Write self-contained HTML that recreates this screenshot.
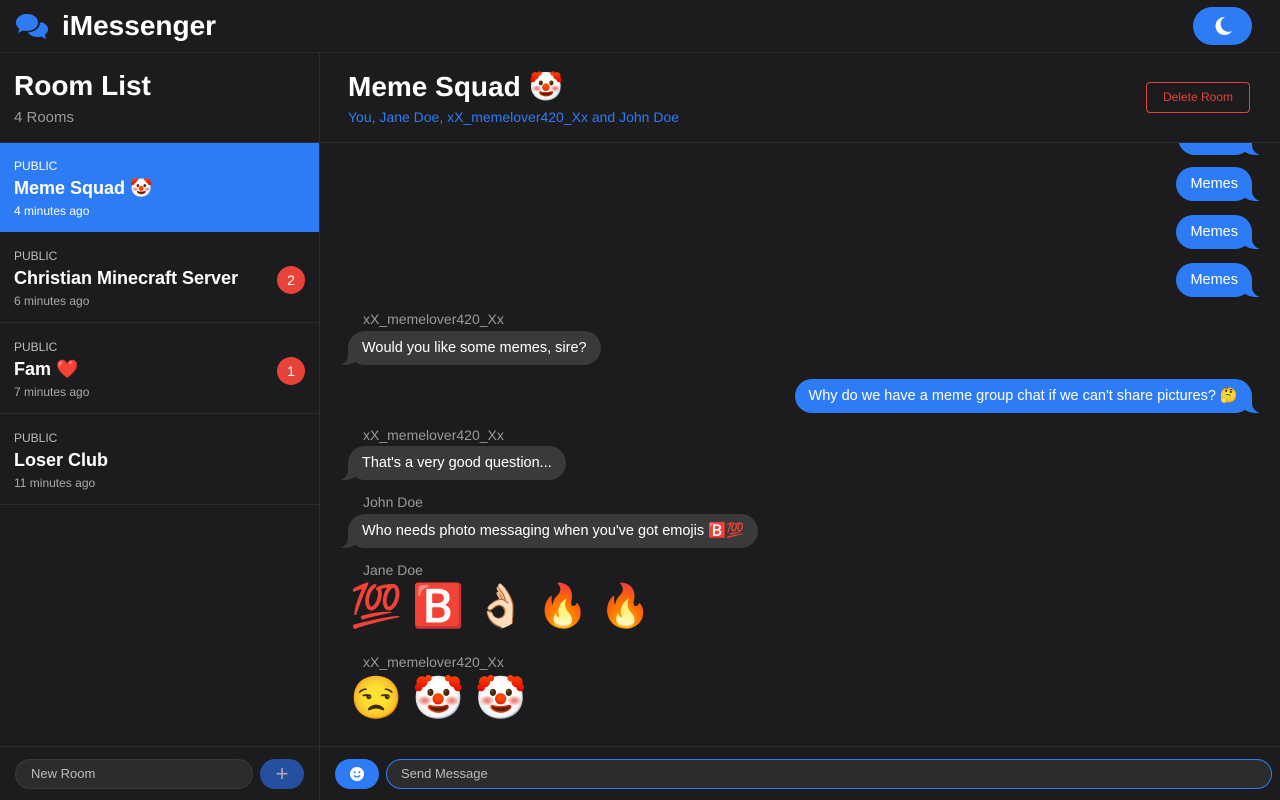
<!DOCTYPE html>
<html><head><meta charset="utf-8"><style>
*{box-sizing:border-box;margin:0;padding:0}
body{width:1280px;height:800px;background:#1c1c1e;font-family:"Liberation Sans","Noto Sans CJK JP",sans-serif;color:#fff;position:relative;overflow:hidden}
.a{position:absolute}
.hl{position:absolute;background:#2c2c2e;height:1px}
.room{position:absolute;left:0;width:319px;height:90px;border-bottom:1px solid #2c2c2e}
.room .t{position:absolute;left:14px;top:16px;font-size:12px;color:#bbb}
.room .n{position:absolute;left:14px;top:35px;font-size:18px;font-weight:bold}
.room .m{position:absolute;left:14px;top:61px;font-size:12px;color:#aaa}
.badge{position:absolute;left:277px;top:33px;width:28px;height:28px;border-radius:14px;background:#e8433a;font-size:14px;text-align:center;line-height:28px}
.b{position:absolute;height:34px;line-height:34px;padding:0 14px;border-radius:17px;font-size:14.5px;white-space:nowrap;z-index:1}
.r{background:#2d7cf6;right:28px}
.l{background:#3a3a3c;left:348px}
.r:before{content:"";position:absolute;right:-7px;bottom:0;width:20px;height:17px;background:#2d7cf6;border-bottom-left-radius:16px 14px;z-index:-1}
.r:after{content:"";position:absolute;right:-26px;bottom:0;width:26px;height:17px;background:#1c1c1e;border-bottom-left-radius:10px;z-index:-1}
.l:before{content:"";position:absolute;left:-7px;bottom:0;width:20px;height:17px;background:#3a3a3c;border-bottom-right-radius:16px 14px;z-index:-1}
.l:after{content:"";position:absolute;left:-26px;bottom:0;width:26px;height:17px;background:#1c1c1e;border-bottom-right-radius:10px;z-index:-1}
.nm{position:absolute;left:363px;font-size:14px;color:#999}
.em{position:absolute;left:350px;font-size:42px;letter-spacing:10px}
.cover{position:absolute;left:320px;top:53px;width:960px;height:89px;background:#1c1c1e;z-index:5}
</style></head><body>
<svg class="a" style="left:15px;top:13px" width="34" height="28" viewBox="0 0 34 28"><path d="M12 1C5.5 1 1 4.8 1 9.5c0 2.5 1.3 4.6 3.4 6.1L3 20l5-2.6c1.2.3 2.5.5 4 .5 6.5 0 11-3.8 11-8.4S18.5 1 12 1z" fill="#2d7cf6"/><path d="M25 9.5c0 5.3-5 9.5-12 9.8 1.6 2.8 5.3 4.7 9.5 4.7 1.3 0 2.6-.2 3.7-.5L31 26l-1.2-4.3C31.8 20.3 33 18.4 33 16.2c0-3-2.5-5.6-6.1-6.8z" fill="#2d7cf6"/></svg>
<div class="a" style="left:62px;top:10px;font-size:28px;font-weight:bold">iMessenger</div>
<div class="a" style="left:1193px;top:7px;width:59px;height:38px;border-radius:19px;background:#2d7cf6"></div>
<svg class="a" style="left:1212px;top:15px" width="22" height="22" viewBox="0 0 22 22"><path d="M13 2A9 9 0 1 0 20 16 7.5 7.5 0 0 1 13 2z" fill="#fff"/></svg>
<div class="hl" style="left:0;top:52px;width:1280px"></div>
<div class="a" style="left:319px;top:53px;width:1px;height:747px;background:#2c2c2e"></div>
<div class="a" style="left:14px;top:70px;font-size:28px;font-weight:bold">Room List</div>
<div class="a" style="left:14px;top:109px;font-size:15px;color:#999">4 Rooms</div>
<div class="hl" style="left:0;top:142px;width:1280px;z-index:6"></div>
<div class="room" style="top:143px;background:#2d7cf6;border:none;height:89px"><div class="t" style="color:#fff">PUBLIC</div><div class="n">Meme Squad 🤡</div><div class="m" style="color:#fff">4 minutes ago</div></div>
<div class="room" style="top:233px"><div class="t">PUBLIC</div><div class="n">Christian Minecraft Server</div><div class="m">6 minutes ago</div><div class="badge">2</div></div>
<div class="room" style="top:324px"><div class="t">PUBLIC</div><div class="n">Fam ❤️</div><div class="m">7 minutes ago</div><div class="badge">1</div></div>
<div class="room" style="top:415px"><div class="t">PUBLIC</div><div class="n">Loser Club</div><div class="m">11 minutes ago</div></div>
<div class="cover">
<div class="a" style="left:28px;top:17px;font-size:28px;font-weight:bold">Meme Squad 🤡</div>
<div class="a" style="left:28px;top:56px;font-size:14px;color:#2d7cf6">You, Jane Doe, xX_memelover420_Xx and John Doe</div>
<div class="a" style="left:826px;top:29px;width:104px;height:31px;border:1px solid #e0443a;border-radius:4px;color:#e0443a;font-size:12px;text-align:center;line-height:29px">Delete Room</div>
</div>
<div class="b r" style="top:121px;width:74px"></div>
<div class="b r" style="top:167px">Memes</div>
<div class="b r" style="top:215px">Memes</div>
<div class="b r" style="top:263px">Memes</div>
<div class="nm" style="top:311px">xX_memelover420_Xx</div>
<div class="b l" style="top:331px">Would you like some memes, sire?</div>
<div class="b r" style="top:379px">Why do we have a meme group chat if we can't share pictures? 🤔</div>
<div class="nm" style="top:427px">xX_memelover420_Xx</div>
<div class="b l" style="top:446px">That's a very good question...</div>
<div class="nm" style="top:494px">John Doe</div>
<div class="b l" style="top:514px">Who needs photo messaging when you've got emojis 🅱️💯</div>
<div class="nm" style="top:562px">Jane Doe</div>
<div class="em" style="top:582px">💯🅱️👌🏻🔥🔥</div>
<div class="nm" style="top:654px">xX_memelover420_Xx</div>
<div class="em" style="top:674px">😒🤡🤡</div>
<div class="hl" style="left:0;top:746px;width:1280px"></div>
<div class="a" style="left:15px;top:759px;width:238px;height:30px;border-radius:15px;background:#2c2c2e;border:1px solid #3a3a3c;font-size:13px;color:#bbb;padding-left:15px;line-height:28px">New Room</div>
<div class="a" style="left:260px;top:759px;width:44px;height:30px;border-radius:15px;background:#2550a0;color:#aab;font-size:22px;text-align:center;line-height:30px">+</div>
<div class="a" style="left:335px;top:759px;width:44px;height:30px;border-radius:15px;background:#2d7cf6"></div>
<svg class="a" style="left:349px;top:766px" width="16" height="16" viewBox="0 0 16 16"><circle cx="8" cy="8" r="7" fill="#fff"/><circle cx="5.7" cy="6.3" r="1" fill="#2d7cf6"/><circle cx="10.3" cy="6.3" r="1" fill="#2d7cf6"/><path d="M4.8 9.5Q8 12.5 11.2 9.5" stroke="#2d7cf6" stroke-width="1.2" fill="none"/></svg>
<div class="a" style="left:386px;top:759px;width:886px;height:30px;border-radius:15px;background:#2c2c2e;border:1px solid #2d7cf6;font-size:13px;color:#bbb;padding-left:14px;line-height:28px">Send Message</div>
</body></html>
